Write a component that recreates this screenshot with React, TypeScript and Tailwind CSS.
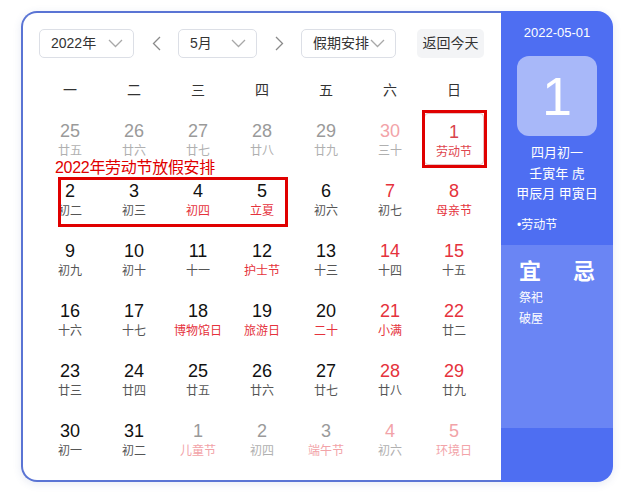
import React from "react";

type Cell = { n: number; l: string; nc: string; lc: string; sel?: boolean };

const BK = "text-[#111111]";
const LN = "text-[#555555]";
const RD = "text-[#e5323c]";
const GN = "text-[#9a9a9a]";
const GL = "text-[#b0b0b0]";
const FR = "text-[#f2a3a8]";

const c = (n: number, l: string, nc = BK, lc = LN, sel = false): Cell => ({ n, l, nc, lc, sel });

const rows: Cell[][] = [
  [c(25, "廿五", GN, GL), c(26, "廿六", GN, GL), c(27, "廿七", GN, GL), c(28, "廿八", GN, GL), c(29, "廿九", GN, GL), c(30, "三十", FR, GL), c(1, "劳动节", "text-[#d9434c]", "text-[#e0454e]", true)],
  [c(2, "初二"), c(3, "初三"), c(4, "初四", BK, RD), c(5, "立夏", BK, RD), c(6, "初六"), c(7, "初七", RD), c(8, "母亲节", RD, RD)],
  [c(9, "初九"), c(10, "初十"), c(11, "十一"), c(12, "护士节", BK, RD), c(13, "十三"), c(14, "十四", RD), c(15, "十五", RD)],
  [c(16, "十六"), c(17, "十七"), c(18, "博物馆日", BK, RD), c(19, "旅游日", BK, RD), c(20, "二十", BK, RD), c(21, "小满", RD, RD), c(22, "廿二", RD)],
  [c(23, "廿三"), c(24, "廿四"), c(25, "廿五"), c(26, "廿六"), c(27, "廿七"), c(28, "廿八", RD), c(29, "廿九", RD)],
  [c(30, "初一"), c(31, "初二"), c(1, "儿童节", GN, FR), c(2, "初四", GN, GL), c(3, "端午节", GN, FR), c(4, "初六", FR, GL), c(5, "环境日", FR, FR)],
];

const week = ["一", "二", "三", "四", "五", "六", "日"];

function Chevron() {
  return (
    <svg width="15" height="9" viewBox="0 0 15 9" fill="none">
      <polyline points="1,1 7.5,7.5 14,1" stroke="#a8a8a8" strokeWidth="1.3" />
    </svg>
  );
}

function Select({ label, w }: { label: string; w: string }) {
  return (
    <div className={`${w} h-[29px] flex items-center justify-between pl-[11px] pr-[10px] border border-[#dcdfe6] rounded-[5px] text-[14px] text-[#333333]`}>
      <span>{label}</span>
      <Chevron />
    </div>
  );
}

function Arrow({ left }: { left?: boolean }) {
  return (
    <svg width="9" height="15" viewBox="0 0 9 15" fill="none">
      <polyline points={left ? "8,1 1.5,7.5 8,14" : "1,1 7.5,7.5 1,14"} stroke="#8a8a8a" strokeWidth="1.3" />
    </svg>
  );
}

export default function App() {
  return (
    <div
      className="w-[637px] h-[497px] bg-white pt-[11px] pl-[21px]"
      style={{ fontFamily: '"Liberation Sans", "Noto Sans CJK SC", sans-serif' }}
    >
      <div className="flex w-[592px] h-[471px] rounded-[16px] shadow-[0_2px_8px_rgba(60,80,160,0.12)]">
        {/* left */}
        <div className="w-[480px] h-full border-l-2 border-t-2 border-b-2 border-[#5a74d4] rounded-l-[16px] bg-white pt-[16px] pl-[15px]">
          <div className="flex items-center pl-[1px]">
            <Select label="2022年" w="w-[95px]" />
            <div className="w-[44px] flex justify-center"><Arrow left /></div>
            <Select label="5月" w="w-[79px]" />
            <div className="w-[44px] flex justify-center"><Arrow /></div>
            <Select label="假期安排" w="w-[95px]" />
            <div className="ml-[21px] w-[67px] h-[29px] rounded-[5px] bg-[#f3f4f6] text-[14px] text-[#333333] flex items-center justify-center">
              返回今天
            </div>
          </div>
          <div className="mt-[13px] grid grid-cols-[repeat(7,64px)] h-[38px] items-center text-[14px] text-[#333333]">
            {week.map((d) => (
              <div key={d} className="text-center">{d}</div>
            ))}
          </div>
          <div className="relative w-[448px]">
            <div className="grid grid-cols-[repeat(7,64px)]">
              {rows.flat().map((cell, i) => (
                <div key={i} className="h-[60px] px-[2px] py-[4px]">
                  <div
                    className={`h-[52px] flex flex-col items-center pt-[7px] rounded-[4px] ${cell.sel ? "border border-[#e6c2c4]" : ""}`}
                  >
                    <div className={`text-[18px] leading-[22px] ${cell.nc}`}>{cell.n}</div>
                    <div className={`text-[12px] leading-[18px] ${cell.lc}`}>{cell.l}</div>
                  </div>
                </div>
              ))}
            </div>
            {/* annotations */}
            <div className="absolute left-[384px] top-[1px] w-[65px] h-[58px] border-[3px] border-[#e00000]" />
            <div className="absolute left-[20px] top-[68px] w-[230px] h-[50px] border-[3px] border-[#e00000]" />
            <div className="absolute left-[17px] top-[50px] text-[16px] leading-[18px] text-[#e00000] whitespace-nowrap tracking-[-0.3px]">
              2022年劳动节放假安排
            </div>
          </div>
        </div>
        {/* right panel */}
        <div className="w-[112px] h-full rounded-r-[16px] bg-[#4e6ef2] flex flex-col text-white overflow-hidden">
          <div className="pt-[13px] text-[13px] leading-[18px] text-center">2022-05-01</div>
          <div className="mt-[14px] mx-auto w-[80px] h-[80px] rounded-[12px] bg-[#a8b8f9] flex items-center justify-center text-[54px] leading-none">
            1
          </div>
          <div className="mt-[7px] text-[13px] leading-[20.5px] text-center">
            <div>四月初一</div>
            <div>壬寅年 虎</div>
            <div>甲辰月 甲寅日</div>
          </div>
          <div className="mt-[12px] pl-[16px] text-[12px] leading-[16px]">•劳动节</div>
          <div className="mt-[12px] h-[183px] bg-[#6a85f4] pl-[18px] pt-[15px]">
            <div className="flex text-[22px] leading-[24px] font-bold">
              <span>宜</span>
              <span className="ml-[32px]">忌</span>
            </div>
            <div className="mt-[4px] text-[12px] leading-[21px]">
              <div>祭祀</div>
              <div>破屋</div>
            </div>
          </div>
        </div>
      </div>
    </div>
  );
}
